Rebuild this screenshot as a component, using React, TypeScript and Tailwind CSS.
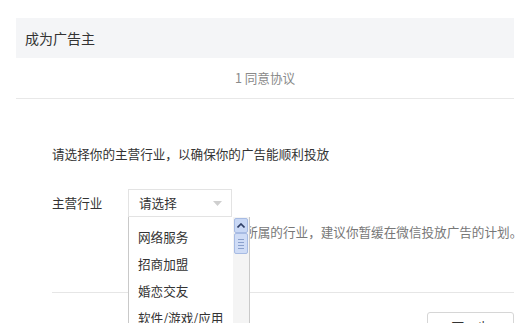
import React from "react";

const items = ["网络服务", "招商加盟", "婚恋交友", "软件/游戏/应用", "教育培训"];

export default function App() {
  return (
    <div
      className="relative w-[530px] h-[323px] overflow-hidden bg-white"
      style={{ fontFamily: '"Noto Sans CJK SC", "Noto Sans", sans-serif' }}
    >
      <div className="pt-[18px] pl-[16px] pr-[16px]">
        <div className="h-[40px] bg-[#f4f5f7] pl-[9px] flex items-center text-[14px] text-[#333]">
          成为广告主
        </div>
        <div className="h-[41px] flex items-center justify-center text-[12.6px] text-[#8a8a8a] border-b border-[#e8e8e8]">
          1 同意协议
        </div>
        <div className="pl-[36px]">
          <div className="mt-[45px] text-[12.6px] leading-[20px] text-[#333]">
            请选择你的主营行业，以确保你的广告能顺利投放
          </div>
          <div className="mt-[25px] flex">
            <div className="w-[76px] text-[12.6px] leading-[28px] text-[#333]">主营行业</div>
            <div className="relative">
              <div className="w-[104px] h-[28px] border border-[#e3e3e3] flex items-center justify-between pl-[10px] pr-[9px] text-[12.6px] text-[#333]">
                <span>请选择</span>
                <svg width="9" height="5" viewBox="0 0 9 5">
                  <path d="M0 0 L9 0 L4.5 5 Z" fill="#cfcfcf" />
                </svg>
              </div>
              <div className="absolute left-0 top-full z-10 w-[122px] h-[130px] bg-white border-l border-r border-[#c9c9c9] flex">
                <div className="flex-1 pt-[7px]">
                  {items.map((t) => (
                    <div key={t} className="h-[27px] pl-[9px] flex items-center text-[12.6px] text-[#333] whitespace-nowrap">
                      {t}
                    </div>
                  ))}
                </div>
                <div className="w-[16px] bg-[#f4f4f4] flex flex-col">
                  <div className="h-[15px] mt-[1px] mx-[1px] rounded-[2px] bg-[#c9d8f5] border border-[#a7bbe3] flex items-center justify-center">
                    <svg width="8" height="5" viewBox="0 0 8 5">
                      <path d="M0.5 4.5 L4 1 L7.5 4.5" stroke="#2f3f66" strokeWidth="1.6" fill="none" />
                    </svg>
                  </div>
                  <div className="h-[21px] mx-[1px] rounded-[2px] bg-[#cfdcf6] border border-[#a7bbe3] flex flex-col items-center justify-center gap-[2px]">
                    <div className="w-[6px] h-[1px] bg-[#8aa0cc]" />
                    <div className="w-[6px] h-[1px] bg-[#8aa0cc]" />
                    <div className="w-[6px] h-[1px] bg-[#8aa0cc]" />
                    <div className="w-[6px] h-[1px] bg-[#8aa0cc]" />
                  </div>
                </div>
              </div>
            </div>
          </div>
          <div className="mt-[7px] pl-[76px] text-[12.6px] leading-[16px] text-[#777] whitespace-nowrap">
            <span className="pl-[29px]">如果以上没有你所属的行业，建议你暂缓在微信投放广告的计划。</span>
          </div>
          <div className="mt-[52px] border-t border-[#e6e6e6]" />
          <div className="mt-[19px] flex justify-end">
            <div className="w-[87px] h-[30px] border border-[#d6d6d6] rounded-[3px] flex items-center justify-center text-[12.6px] text-[#333]">
              下一步
            </div>
          </div>
        </div>
      </div>
    </div>
  );
}
